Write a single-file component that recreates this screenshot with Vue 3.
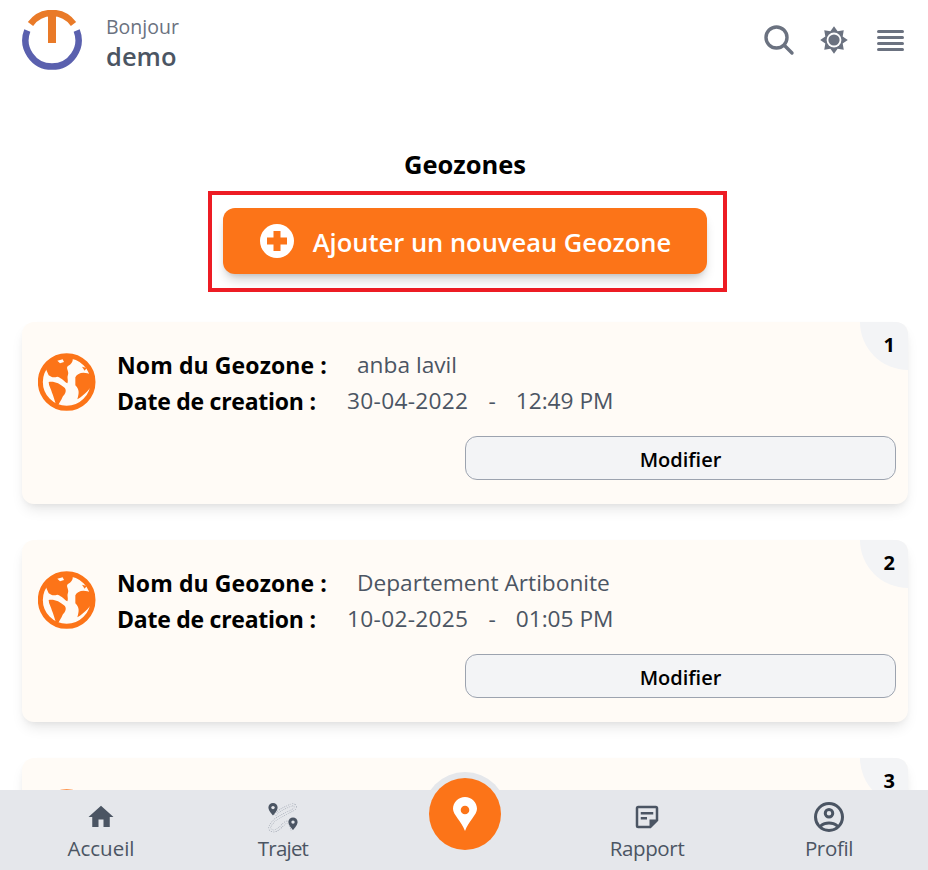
<template>
  <div class="page">
    <header class="top">
      <div class="brand">
        <svg class="logo" viewBox="0 0 60 60" width="60" height="60">
          <path d="M5.3 20.5 A26.5 26.5 0 1 0 54.7 20.5" fill="none" stroke="#5a60ae" stroke-width="6.5" />
          <path d="M8.5 14 A26.5 26.5 0 0 1 51.5 14" fill="none" stroke="#e97a28" stroke-width="6.5" />
          <rect x="26" y="5" width="8" height="28" fill="#e97a28" />
        </svg>
        <div class="hello">
          <span class="hi">Bonjour</span>
          <span class="name">demo</span>
        </div>
      </div>
      <div class="tools">
        <svg class="search" viewBox="0 0 32 32" width="32" height="32" fill="none" stroke="#6b7280" stroke-width="3.4" stroke-linecap="round">
          <circle cx="13.5" cy="13.5" r="10.5" />
          <path d="M21.5 21.5 L29 29" />
        </svg>
        <svg class="sun" viewBox="0 0 28 28" width="28" height="28">
          <path fill="#6b7280" :d="sunPath" />
          <circle cx="14" cy="14" r="7.4" fill="#fff" />
          <circle cx="14" cy="14" r="5.6" fill="#6b7280" />
        </svg>
        <div class="burger"><i v-for="n in 4" :key="n"></i></div>
      </div>
    </header>

    <main class="content">
      <h1>Geozones</h1>
      <div class="add-frame">
        <button class="add">
          <svg viewBox="0 0 34 34" width="34" height="34">
            <circle cx="17" cy="17" r="17" fill="#fff" />
            <path d="M17 7v20M7 17h20" stroke="#fc7418" stroke-width="7" />
          </svg>
          <span>Ajouter un nouveau Geozone</span>
        </button>
      </div>

      <section class="list">
        <article v-for="(g, i) in geozones" :key="i" class="card">
          <div class="corner">{{ i + 1 }}</div>
          <div class="info">
            <svg class="globe" viewBox="18 17 174 174" width="58" height="58">
              <circle cx="104" cy="104" r="79" fill="#fffbf6" stroke="#fc7418" stroke-width="15" />
              <g fill="#fc7418">
                <path d="M42 66 L64 30 L122 30 C124 44 118 50 108 56 C100 62 112 72 108 82 C104 92 110 98 106 108 C98 104 90 92 76 88 C66 92 58 90 50 84 Z" />
                <path d="M50 104 C64 100 84 108 96 120 C106 128 100 140 92 148 C88 158 82 166 76 178 C70 170 66 150 60 136 C58 126 50 116 50 104 Z" />
                <path d="M130 90 C136 78 150 74 166 78 L186 84 L186 108 C174 124 158 144 136 156 C142 136 142 126 130 114 Z" />
                <path d="M150 58 L164 62 L158 70 Z" />
              </g>
              <path d="M76 40 L92 36 L96 44 L84 48 Z" fill="#fffbf6" />
            </svg>
            <div class="rows">
              <div class="row">
                <b class="lbl-name">Nom du Geozone :</b>
                <span>{{ g.name }}</span>
              </div>
              <div class="row">
                <b class="lbl-date">Date de creation :</b>
                <span class="when"><span class="day">{{ g.date }}</span><em>-</em>{{ g.time }}</span>
              </div>
            </div>
          </div>
          <div class="actions"><button class="edit">Modifier</button></div>
        </article>
      </section>
    </main>

    <nav class="bottom">
      <a class="tab">
        <span class="ico"><svg viewBox="0 0 24 24" width="30" height="30"><path fill="#4b5563" d="M10 20v-6h4v6h5v-8h3L12 3 2 12h3v8z" /></svg></span>
        <span>Accueil</span>
      </a>
      <a class="tab">
        <span class="ico">
          <svg viewBox="0 0 32 32" width="32" height="32" fill="none">
            <path :d="road" stroke="#9ca3af" stroke-width="2.6" stroke-dasharray="1 1" />
            <path :d="road" stroke="#e5e7eb" stroke-width="1.400" />
            <path fill="#4b5563" d="M6 2a4.600 4.600 0 0 0-4.600 4.600C1.400 10 6 14.500 6 14.500s4.600-4.500 4.600-7.900A4.600 4.600 0 0 0 6 2z" />
            <circle cx="6" cy="6.600" r="1.700" fill="#e5e7eb" />
            <path fill="#4b5563" d="M26 16.500a4.600 4.600 0 0 0-4.600 4.600c0 3.400 4.600 7.900 4.600 7.900s4.600-4.500 4.600-7.900a4.600 4.600 0 0 0-4.600-4.600z" />
            <circle cx="26" cy="21.100" r="1.700" fill="#e5e7eb" />
          </svg>
        </span>
        <span class="t-trajet">Trajet</span>
      </a>
      <div class="tab center">
        <div class="pin">
          <svg viewBox="0 0 24 34" width="24" height="34">
            <path fill-rule="evenodd" fill="#fff" d="M12 0C5.400 0 0 5.300 0 11.800 0 18 8.500 24 12 34c3.500-10 12-16 12-22.200C24 5.300 18.600 0 12 0zm0 8.700a4.300 4.300 0 1 1 0 8.600 4.300 4.300 0 0 1 0-8.600z" />
          </svg>
        </div>
      </div>
      <a class="tab">
        <span class="ico">
          <svg viewBox="0 0 24 24" width="30" height="30">
            <path fill="#4b5563" d="M19 5v9h-5v5H5V5h14m0-2H5a2 2 0 0 0-2 2v14a2 2 0 0 0 2 2h10l6-6V5a2 2 0 0 0-2-2zm-7 11H7v-2h5v2zm5-4H7V8h10v2z" />
          </svg>
        </span>
        <span class="t-soft">Rapport</span>
      </a>
      <a class="tab">
        <span class="ico">
          <svg viewBox="0 0 24 24" width="36" height="36">
            <path fill="#4b5563" d="M12 2a10 10 0 1 0 0 20 10 10 0 0 0 0-20zM7.350 18.500C8.660 17.560 10.260 17 12 17s3.340.56 4.650 1.500C15.340 19.440 13.740 20 12 20s-3.340-.56-4.650-1.500zm10.790-1.380C16.450 15.800 14.320 15 12 15s-4.450.8-6.140 2.120A7.960 7.960 0 0 1 4 12c0-4.420 3.580-8 8-8s8 3.580 8 8c0 1.950-.7 3.730-1.860 5.120zM12 6a3.500 3.500 0 1 0 0 7 3.500 3.500 0 0 0 0-7zm0 5a1.500 1.500 0 1 1 0-3 1.500 1.500 0 0 1 0 3z" />
          </svg>
        </span>
        <span class="t-soft">Profil</span>
      </a>
    </nav>
  </div>
</template>

<script setup>
const geozones = [
  { name: 'anba lavil', date: '30-04-2022', time: '12:49 PM' },
  { name: 'Departement Artibonite', date: '10-02-2025', time: '01:05 PM' },
  { name: 'Zone Nord', date: '12-02-2025', time: '09:30 AM' }
];

// 8 branches autour du soleil
const sunPath = Array.from({ length: 16 }, (_, i) => {
  const r = i % 2 === 0 ? 13.8 : 9.4;
  const a = (i * Math.PI) / 8 - Math.PI / 2;
  return `${i === 0 ? 'M' : 'L'}${(14 + r * Math.cos(a)).toFixed(2)} ${(14 + r * Math.sin(a)).toFixed(2)}`;
}).join(' ') + 'Z';

const road = 'M8 14 C12 9 20 6 24 4 C29 3 30 7 26 9 C21 12 10 16 6 21 C1 26 2 30 7 30 C12 30 16 22 20 21 C23 21 24 26 25 29';
</script>

<style>
html, body { margin: 0; height: 100%; overflow: hidden; background: #fff; }
</style>

<style scoped>
.page {
  height: 870px;
  overflow: hidden;
  position: relative;
  font-family: "Open Sans", "Noto Sans", sans-serif;
  color: #000;
}
.top {
  display: flex;
  justify-content: space-between;
  align-items: flex-start;
  padding: 10px 24px 0 22px;
  height: 70px;
}
.brand { display: flex; gap: 24px; }
.logo { display: block; }
.hello { display: flex; flex-direction: column; padding-top: 4px; }
.hi { font-size: 19.5px; line-height: 26px; color: #6b7280; }
.name { font-size: 25.5px; line-height: 32px; font-weight: 600; color: #4b5563; }
.tools { display: flex; align-items: center; gap: 27px; padding-top: 14px; }
.tools svg { display: block; }
.search { margin-right: -2px; }
.sun { margin-right: 2px; }
.burger { display: flex; flex-direction: column; gap: 3px; width: 27px; }
.burger i { height: 3px; border-radius: 2px; background: #6b7280; display: block; }

.content { padding: 0 20px 0 22px; }
h1 {
  margin: 0;
  padding-top: 68px;
  text-align: center;
  font-size: 25.5px;
  line-height: 32px;
  font-weight: 700;
}
.add-frame {
  box-sizing: border-box;
  width: 519px;
  height: 101px;
  margin: 11px 0 0 186px;
  border: 4px solid #ed1c24;
  padding: 13px 0 0 11px;
}
.add {
  width: 484px;
  height: 66px;
  display: flex;
  align-items: center;
  justify-content: center;
  gap: 19px;
  border: 0;
  border-radius: 12px;
  background: #fc7418;
  color: #fff;
  font: 600 25.5px "Open Sans", sans-serif;
  box-shadow: 0 8px 12px -3px rgba(0, 0, 0, 0.2), 0 3px 5px -2px rgba(0, 0, 0, 0.1);
}
.add svg { margin-left: 1px; }
.add span { padding-top: 2px; }
.list { display: flex; flex-direction: column; gap: 36px; margin-top: 30px; }
.card {
  position: relative;
  height: 182px;
  box-sizing: border-box;
  padding: 25px 12px 0 16px;
  background: #fffbf6;
  border-radius: 12px;
  overflow: hidden;
  box-shadow: 0 8px 14px -3px rgba(0, 0, 0, 0.1), 0 3px 6px -2px rgba(0, 0, 0, 0.05);
}
.corner {
  position: absolute;
  top: 0;
  right: 0;
  box-sizing: border-box;
  width: 48px;
  height: 48px;
  padding: 9px 13px 0 0;
  text-align: right;
  background: #f3f4f6;
  border-bottom-left-radius: 48px;
  font-size: 20px;
  line-height: 28px;
  font-weight: 700;
}
.info { display: flex; gap: 22px; }
.globe { display: block; margin-top: 6px; }
.rows { font-size: 22.7px; line-height: 36px; color: #4b5563; margin-left: -1px; }
.row { display: flex; }
.row b { color: #000; font-weight: 700; font-size: 23px; }
.lbl-name { width: 240px; letter-spacing: 0.1px; }
.lbl-date { width: 230px; letter-spacing: -0.25px; }
.day { letter-spacing: 0.3px; }
.when em { font-style: normal; margin: 0 20px; }
.actions { display: flex; justify-content: flex-end; margin-top: 17px; }
.edit {
  width: 431px;
  height: 44px;
  padding: 2px 0 0;
  border: 1px solid #9ca3af;
  border-radius: 12px;
  background: #f3f4f6;
  color: #000;
  font: 600 20px "Open Sans", sans-serif;
}
.bottom {
  position: fixed;
  left: 0;
  right: 0;
  bottom: 0;
  height: 80px;
  box-sizing: border-box;
  padding: 0 8px 0 10px;
  display: grid;
  grid-template-columns: repeat(5, 1fr);
  background: #e5e7eb;
}
.tab {
  display: flex;
  flex-direction: column;
  align-items: center;
  padding-top: 9px;
  color: #4b5563;
  font-size: 20.5px;
  line-height: 26px;
}
.t-trajet { letter-spacing: -0.8px; }
.t-soft { letter-spacing: -0.35px; }
.ico { display: flex; align-items: center; justify-content: center; height: 36px; }
.tab svg { display: block; }
.center { position: relative; }
.pin {
  position: absolute;
  top: -12px;
  left: 55px;
  width: 72px;
  height: 72px;
  border-radius: 50%;
  background: #fc7418;
  box-shadow: 0 0 0 6px #e5e7eb;
  display: flex;
  align-items: center;
  justify-content: center;
}
</style>
